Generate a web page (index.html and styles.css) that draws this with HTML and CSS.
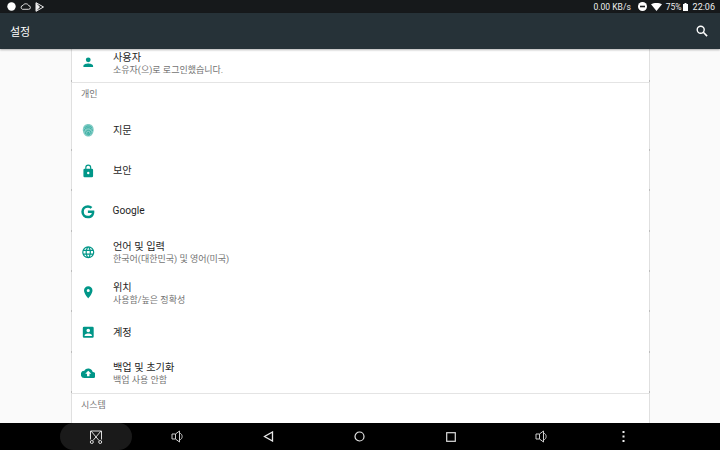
FILE: index.html
```html
<!DOCTYPE html>
<html lang="ko">
<head>
    <meta charset="UTF-8">
    <meta name="viewport" content="width=device-width, initial-scale=1.0">
    <title>설정</title>
    <link rel="stylesheet" href="styles.css">
</head>
<body>
    <!-- Status bar -->
    <div class="status-bar">
        <div class="status-left">
            <svg width="9" height="9" viewBox="0 0 9 9"><circle cx="4.5" cy="4.5" r="4.2" fill="#fff"/></svg>
            <svg width="11" height="7" viewBox="0 0 11 7"><path d="M2.500 6.300h6a1.800 1.800 0 0 0 .2-3.600C8 .2 3.800.2 3 2.400a2 2 0 0 0-.5 3.900z" fill="none" stroke="#eee" stroke-width=".9"/></svg>
            <svg width="9" height="10" viewBox="0 0 9 10"><path d="M1 .7v8.600L8.500 5z" fill="none" stroke="#eee"/><path d="M1 .7L5 5 1 9.300z" fill="#eee"/></svg>
        </div>
        <div class="status-right">
            <span class="net-speed">0.00 KB/s</span>
            <svg width="9" height="9" viewBox="0 0 9 9"><circle cx="4.500" cy="4.500" r="4.500" fill="#fff"/><rect x="2" y="3.700" width="5" height="1.600" fill="#1a1c1e"/></svg>
            <svg width="11" height="8" viewBox="0 0 11 8"><path d="M0 1.200C3-.4 8-.4 11 1.200L5.500 8z" fill="#fff"/></svg>
            <span class="battery-text">75%</span>
            <svg class="battery" width="5" height="8" viewBox="0 0 5 8"><path d="M1.500 0h2v1H5v7H0V1h1.500z" fill="#fff"/></svg>
            <span class="clock">22:06</span>
        </div>
    </div>

    <!-- Toolbar -->
    <div class="toolbar">
        <span class="toolbar-title">설정</span>
        <svg width="12" height="12" viewBox="0 0 12 12"><circle cx="4.700" cy="4.700" r="3.500" fill="none" stroke="#fff" stroke-width="1.400"/><path d="M7.300 7.300l3.800 3.800" stroke="#fff" stroke-width="1.600"/></svg>
    </div>

    <!-- Settings list -->
    <div class="content">
        <div class="card">
            <div class="row">
                <svg class="row-icon" viewBox="0 0 24 24"><path d="M12 12a4 4 0 1 0 0-8 4 4 0 0 0 0 8zm0 2c-2.700 0-8 1.300-8 4v2h16v-2c0-2.700-5.300-4-8-4z"/></svg>
                <div class="row-text two-line">
                    <div class="row-title">사용자</div>
                    <div class="row-sub">소유자(으)로 로그인했습니다.</div>
                </div>
            </div>

            <div class="section">
                <div class="section-title">개인</div>
                <div class="row">
                    <svg class="row-icon fingerprint" viewBox="0 0 24 24"><path class="fp-base" d="M12 1.500c5 0 9 3.500 9 9.500 0 6-3.500 11.500-9 11.500S3 17 3 11c0-6 4-9.500 9-9.500z"/><g class="fp-lines"><path d="M6 8c3-4 9-4 12 0"/><path d="M5 13c1-7 13-7 14 0"/><path d="M7.500 18c-1-8 10-8 9 0"/><path d="M10 20c-.5-6 4.500-6 4 0"/><path d="M12 15v6"/></g></svg>
                    <div class="row-text"><div class="row-title">지문</div></div>
                </div>
                <div class="row">
                    <svg class="row-icon" viewBox="0 0 24 24"><path d="M18 8h-1V6A5 5 0 0 0 7 6v2H6a2 2 0 0 0-2 2v10a2 2 0 0 0 2 2h12a2 2 0 0 0 2-2V10a2 2 0 0 0-2-2zm-6 9a2 2 0 1 1 0-4 2 2 0 0 1 0 4zm3.100-9H8.900V6a3.100 3.100 0 0 1 6.200 0z"/></svg>
                    <div class="row-text"><div class="row-title">보안</div></div>
                </div>
                <div class="row">
                    <svg class="row-icon google" viewBox="0 0 24 24"><path d="M12.200 10.200v3.700h6.100c-.6 2.700-2.900 4.400-6.100 4.400a6.300 6.300 0 0 1 0-12.600c1.700 0 3.100.6 4.200 1.600l2.800-2.800A10.100 10.100 0 0 0 12.200 1.800a10.200 10.200 0 1 0 0 20.400c5.900 0 10-4.100 10-10 0-.7-.1-1.400-.2-2z"/></svg>
                    <div class="row-text"><div class="row-title">Google</div></div>
                </div>
                <div class="row">
                    <svg class="row-icon" viewBox="0 0 24 24"><path d="M12 2a10 10 0 1 0 0 20 10 10 0 0 0 0-20zm6.900 6h-3a15.600 15.600 0 0 0-1.400-3.600A8 8 0 0 1 18.900 8zM12 4c.8 1.200 1.500 2.500 1.900 4h-3.800c.4-1.500 1.100-2.800 1.900-4zM4.300 14a8 8 0 0 1 0-4h3.400a16.500 16.500 0 0 0 0 4zm.8 2h3a15.600 15.600 0 0 0 1.400 3.600A8 8 0 0 1 5.100 16zm3-8h-3a8 8 0 0 1 4.400-3.600A15.600 15.600 0 0 0 8.100 8zM12 20c-.8-1.200-1.500-2.500-1.900-4h3.800c-.4 1.500-1.100 2.800-1.900 4zm2.300-6H9.700a14.700 14.700 0 0 1 0-4h4.600a14.700 14.700 0 0 1 0 4zm.2 5.600a15.600 15.600 0 0 0 1.400-3.600h3a8 8 0 0 1-4.400 3.600zm1.800-5.600a16.500 16.500 0 0 0 0-4h3.400a8 8 0 0 1 0 4z"/></svg>
                    <div class="row-text two-line">
                        <div class="row-title">언어 및 입력</div>
                        <div class="row-sub">한국어(대한민국) 및 영어(미국)</div>
                    </div>
                </div>
                <div class="row">
                    <svg class="row-icon" viewBox="0 0 24 24"><path d="M12 2a7 7 0 0 0-7 7c0 5.300 7 13 7 13s7-7.700 7-13a7 7 0 0 0-7-7zm0 9.500a2.500 2.500 0 1 1 0-5 2.500 2.500 0 0 1 0 5z"/></svg>
                    <div class="row-text two-line">
                        <div class="row-title">위치</div>
                        <div class="row-sub">사용함/높은 정확성</div>
                    </div>
                </div>
                <div class="row">
                    <svg class="row-icon" viewBox="0 0 24 24"><path d="M3 5v14a2 2 0 0 0 2 2h14a2 2 0 0 0 2-2V5a2 2 0 0 0-2-2H5a2 2 0 0 0-2 2zm12 4a3 3 0 1 1-6 0 3 3 0 0 1 6 0zm-9 8c0-2 4-3.100 6-3.100s6 1.100 6 3.100v1H6z"/></svg>
                    <div class="row-text"><div class="row-title">계정</div></div>
                </div>
                <div class="row">
                    <svg class="row-icon" viewBox="0 0 24 24"><path d="M19.400 10A7.500 7.500 0 0 0 5.400 8 6 6 0 0 0 6 20h13a5 5 0 0 0 .4-10zM14 13v4h-4v-4H7l5-5 5 5z"/></svg>
                    <div class="row-text two-line">
                        <div class="row-title">백업 및 초기화</div>
                        <div class="row-sub">백업 사용 안함</div>
                    </div>
                </div>
            </div>

            <div class="section">
                <div class="section-title">시스템</div>
            </div>
        </div>
    </div>

    <!-- Navigation bar -->
    <div class="nav-bar">
        <div class="nav-capture">
            <svg width="14" height="14" viewBox="0 0 14 14"><g fill="none" stroke="#ddd"><path d="M1.500 9.500V1h11v8.500"/><path d="M2 1l8 9.500M12 1l-8 9.500"/><circle cx="2.800" cy="12" r="1.500"/><circle cx="11.200" cy="12" r="1.500"/></g></svg>
        </div>
        <div class="nav-buttons">
            <div class="nav-cell"><svg width="13" height="13" viewBox="0 0 13 13"><g fill="none" stroke="#ccc"><path d="M1 4h3.500L8.500 1v11l-4-3H1z"/><path d="M4.500 4v5"/><path d="M8.500 3c3.500 1 3.500 6 0 7"/></g></svg></div>
            <div class="nav-cell"><svg width="11" height="11" viewBox="0 0 11 11"><path d="M9.500 1v9L1.500 5.500z" fill="none" stroke="#e8e8e8" stroke-width="1.300"/></svg></div>
            <div class="nav-cell"><svg width="11" height="11" viewBox="0 0 11 11"><circle cx="5.500" cy="5.500" r="4.500" fill="none" stroke="#e8e8e8" stroke-width="1.200"/></svg></div>
            <div class="nav-cell"><svg width="10" height="10" viewBox="0 0 10 10"><rect x=".7" y=".7" width="8.600" height="8.600" fill="none" stroke="#ddd" stroke-width="1.200"/></svg></div>
            <div class="nav-cell"><svg width="13" height="13" viewBox="0 0 13 13"><g fill="none" stroke="#ccc"><path d="M1 4h3.500L8.500 1v11l-4-3H1z"/><path d="M4.500 4v5"/><path d="M8.500 3c3.500 1 3.500 6 0 7"/></g></svg></div>
            <div class="nav-cell"><svg width="3" height="11" viewBox="0 0 3 11"><g fill="#eee"><rect x=".5" y="0" width="2" height="2"/><rect x=".5" y="4.500" width="2" height="2"/><rect x=".5" y="9" width="2" height="2"/></g></svg></div>
        </div>
    </div>
</body>
</html>
```

FILE: styles.css
```css
* {
    box-sizing: border-box;
}
body {
    margin: 0;
    width: 720px;
    height: 450px;
    overflow: hidden;
    display: flex;
    flex-direction: column;
    font-family: 'Roboto', 'Noto Sans CJK KR', sans-serif;
    background: #fafafa;
}
.status-bar {
    height: 13px;
    flex: none;
    display: flex;
    justify-content: space-between;
    align-items: center;
    padding: 0 5px 0 7px;
    background: #16191b;
    color: #eee;
    font-size: 8.500px;
}
.status-left, .status-right {
    display: flex;
    align-items: center;
}
.status-left {
    gap: 4px;
}
.status-right {
    gap: 4px;
}
.net-speed {
    margin-right: 3px;
}
.battery-text {
    margin-right: -3px;
}
.clock {
    margin-left: 1px;
    font-size: 9px;
}
.toolbar {
    height: 36px;
    flex: none;
    display: flex;
    justify-content: space-between;
    align-items: center;
    padding: 0 12px 1px 10px;
    background: #263238;
    color: #fff;
    box-shadow: 0 1px 2px rgba(0, 0, 0, 0.3);
    position: relative;
    z-index: 1;
}
.toolbar-title {
    font-size: 11px;
}
.content {
    flex: 1;
    overflow: hidden;
}
.card {
    width: 579px;
    min-height: 400px;
    margin: -7px 0 0 71px;
    background: #fff;
    border-left: 1px solid #e0e0e0;
    border-right: 1px solid #e0e0e0;
}
.row {
    height: 40.400px;
    display: flex;
    align-items: center;
    position: relative;
}
/* small darker marks where the rows meet the card edge */
.row::before, .row::after {
    content: "";
    position: absolute;
    bottom: 0;
    width: 1px;
    height: 2px;
    background: #bdbdbd;
}
.row::before {
    left: -1px;
}
.row::after {
    right: -1px;
}
.row-icon {
    width: 14.500px;
    height: 14.500px;
    margin-left: 8.500px;
    fill: #009688;
    flex: none;
}
.row-icon.google {
    width: 15.500px;
    height: 15.500px;
    margin-left: 8px;
}
.fp-base {
    fill: #80cbc4;
}
.fp-lines {
    fill: none;
    stroke: #26a69a;
    stroke-width: 1.200;
}
.row-text {
    margin-left: 18px;
}
.row-icon.google + .row-text {
    margin-left: 17px;
}
.row-title {
    font-size: 10.200px;
    line-height: 14px;
    color: #1f1f1f;
}
.two-line {
    padding-top: 2px;
}
.two-line .row-title {
    line-height: 13px;
}
.row-sub {
    font-size: 9px;
    line-height: 12px;
    color: #737373;
}
.section {
    border-top: 1px solid #e4e4e4;
}
.section-title {
    height: 27px;
    padding: 5px 0 0 9px;
    font-size: 9px;
    line-height: 12px;
    color: #757575;
}
.nav-bar {
    height: 27px;
    flex: none;
    display: flex;
    align-items: center;
    background: #000;
}
.nav-capture {
    width: 72px;
    height: 27px;
    margin-left: 60px;
    display: flex;
    justify-content: center;
    align-items: center;
    background: #1a1a1a;
    border-radius: 14px;
}
.nav-buttons {
    flex: 1;
    display: grid;
    grid-template-columns: repeat(5, 91px) 73px;
    align-items: center;
}
.nav-cell {
    display: flex;
    justify-content: center;
    align-items: center;
}
```
